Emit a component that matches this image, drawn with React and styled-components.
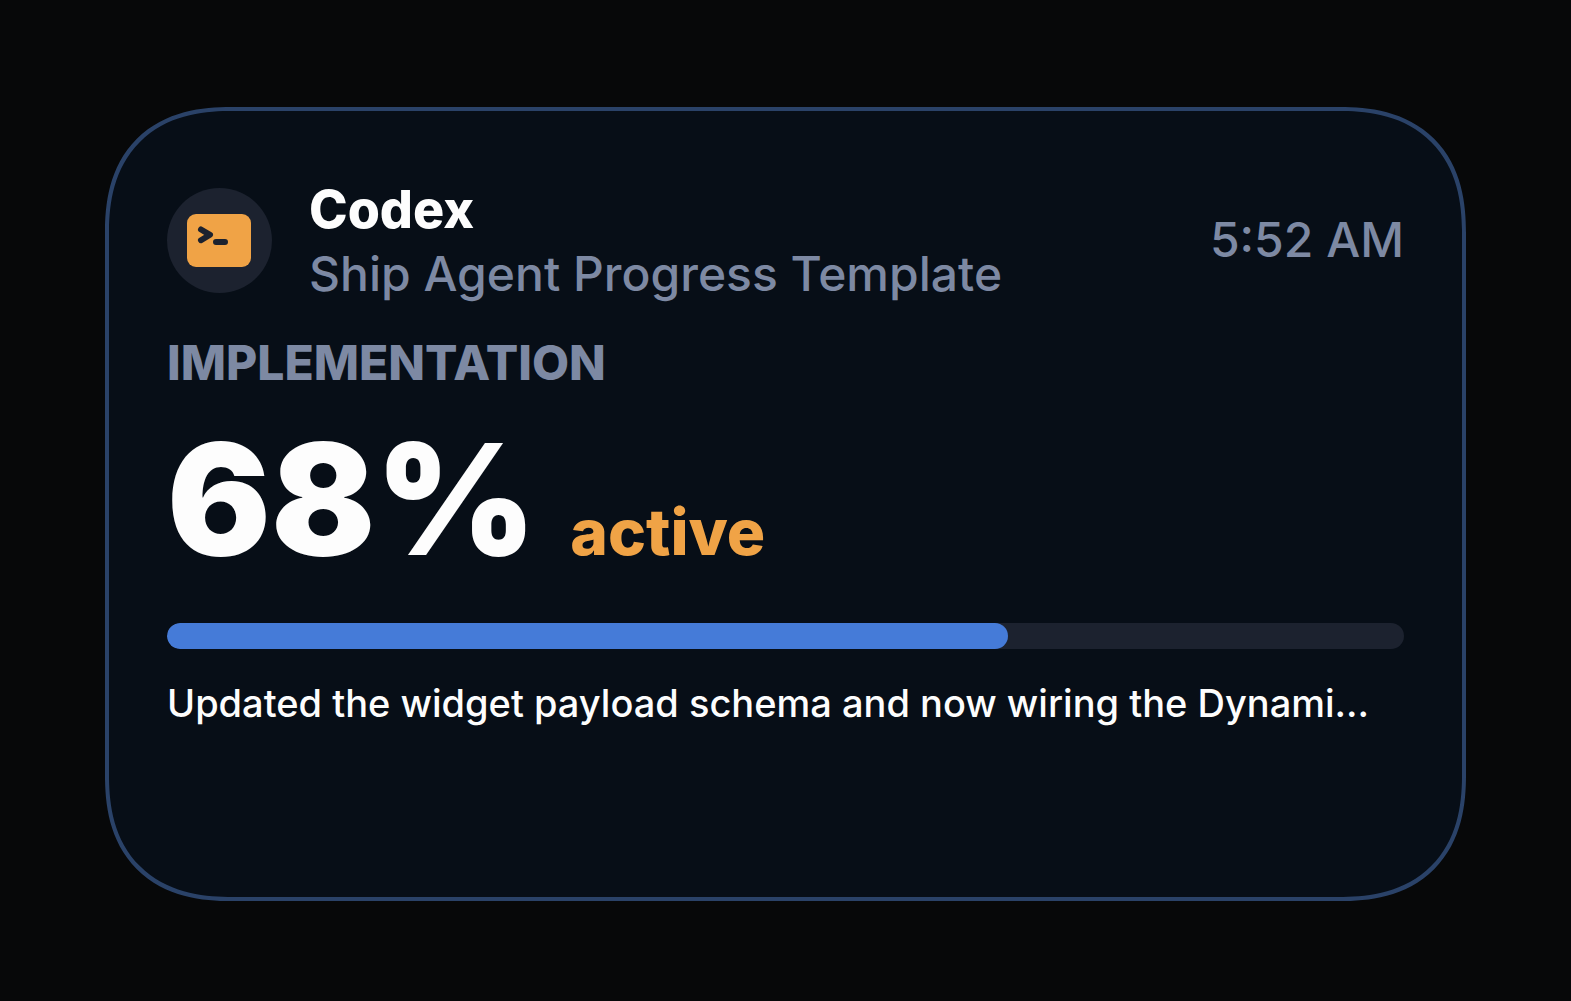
import React from 'react'
import styled, { createGlobalStyle } from "styled-components"

const GlobalStyle = createGlobalStyle`
* {
  box-sizing: border-box;
}
body {
  margin: 0;
  background-color: #070809;
  font-family: Inter, "Liberation Sans", sans-serif;
}
`

const Page = styled.main`
display: flex;
min-height: 100vh;
padding: 107px 105px 100px;
`

const Card = styled.article`
flex: 1;
min-width: 0;
padding: 63px 58px 60px;
background-color: #070e17;
border: 4px solid #2a4268;
border-radius: 126px;
corner-shape: superellipse(1.25);
`

const Header = styled.header`
display: flex;
align-items: center;
gap: 37px;
`

const Badge = styled.div`
display: flex;
align-items: center;
justify-content: center;
flex-shrink: 0;
width: 105px;
height: 105px;
border-radius: 50%;
background-color: #1c222f;
`

const Titles = styled.div`
flex: 1;
min-width: 0;
padding-top: 4px;
`

const Title = styled.h1`
margin: 0;
font-size: 52px;
font-weight: 800;
line-height: 64px;
color: #fdfdfd;
`

const Subtitle = styled.p`
margin: 0;
font-size: 48px;
font-weight: 500;
line-height: 64px;
color: #7d89a3;
`

const Time = styled.time`
font-size: 48px;
font-weight: 500;
line-height: 64px;
white-space: nowrap;
color: #7d89a3;
`

const Stage = styled.h2`
margin: 25px 0 0;
font-size: 48px;
font-weight: 800;
line-height: 64px;
color: #7d89a3;
`

const Status = styled.div`
display: flex;
align-items: baseline;
gap: 34px;
margin-top: 14px;
`

const Percent = styled.span`
font-size: 154px;
font-weight: 900;
line-height: 180px;
color: #fdfdfd;
`

const State = styled.span`
font-size: 64px;
font-weight: 800;
color: #f0a346;
`

const Track = styled.div`
height: 26px;
margin-top: 34px;
border-radius: 13px;
background-color: #1c222f;
overflow: hidden;
`

const Fill = styled.div`
height: 100%;
border-radius: 13px;
background-color: #457bd8;
`

const Message = styled.p`
margin: 28px 0 0;
font-size: 38px;
font-weight: 500;
line-height: 52px;
white-space: nowrap;
color: #fdfdfd;
`

function TerminalIcon() {
  return (
    <svg width="65" height="53" viewBox="0 0 65 53" fill="none" aria-hidden="true">
      <rect width="64" height="53" rx="9" fill="#f0a346" />
      <path
        d="M14 15.5L23 20.8L14 26.2M29 28H38"
        stroke="#1c222f"
        strokeWidth="6"
        strokeLinecap="round"
        strokeLinejoin="round"
      />
    </svg>
  )
}

function ProgressBar({ value }) {
  return (
    <Track role="progressbar" aria-label="Implementation" aria-valuenow={value} aria-valuemin={0} aria-valuemax={100}>
      <Fill style={{ width: `${value}%` }} />
    </Track>
  )
}

function App() {

  const progress = 68

  return (
  <Page>
    <GlobalStyle />
    <Card>
      <Header>
        <Badge><TerminalIcon /></Badge>
        <Titles>
          <Title>Codex</Title>
          <Subtitle>Ship Agent Progress Template</Subtitle>
        </Titles>
        <Time dateTime="05:52">5:52 AM</Time>
      </Header>
      <Stage>IMPLEMENTATION</Stage>
      <Status>
        <Percent>{progress}%</Percent>
        <State>active</State>
      </Status>
      <ProgressBar value={progress} />
      <Message>Updated the widget payload schema and now wiring the Dynami...</Message>
    </Card>
  </Page>
  )
}

export default App;
